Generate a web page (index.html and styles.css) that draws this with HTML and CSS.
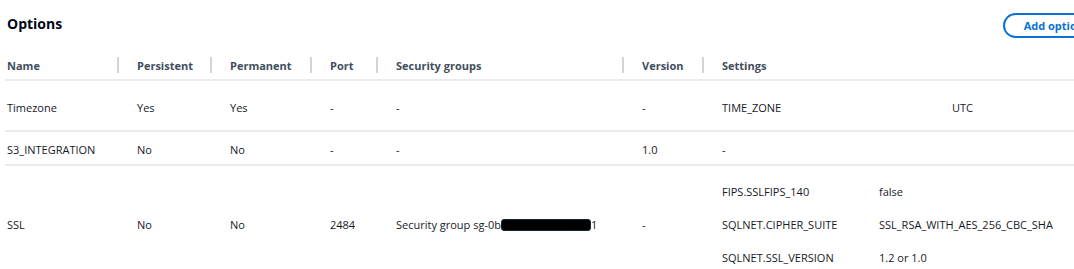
FILE: index.html
```html
<!DOCTYPE html>
<html lang="en">
<head>
    <meta charset="UTF-8">
    <meta name="viewport" content="width=device-width, initial-scale=1.0">
    <title>Options</title>
    <link rel="stylesheet" href="styles.css">
</head>
<body>
    <div class="panel">
        <div class="panel-header">
            <h2>Options</h2>
            <button class="btn-outline">Add option</button>
        </div>

        <table class="options-table">
            <colgroup>
                <col class="col-name">
                <col class="col-persistent">
                <col class="col-permanent">
                <col class="col-port">
                <col class="col-sg">
                <col class="col-version">
                <col class="col-settings">
            </colgroup>
            <thead>
                <tr>
                    <th class="first">Name</th>
                    <th>Persistent</th>
                    <th>Permanent</th>
                    <th>Port</th>
                    <th>Security groups</th>
                    <th>Version</th>
                    <th>Settings</th>
                </tr>
            </thead>
            <tbody>
                <tr class="row-tall">
                    <td class="first">Timezone</td>
                    <td>Yes</td>
                    <td>Yes</td>
                    <td>-</td>
                    <td>-</td>
                    <td>-</td>
                    <td>
                        <div class="settings settings-wide">
                            <span>TIME_ZONE</span><span>UTC</span>
                        </div>
                    </td>
                </tr>
                <tr class="row-short">
                    <td class="first">S3_INTEGRATION</td>
                    <td>No</td>
                    <td>No</td>
                    <td>-</td>
                    <td>-</td>
                    <td>1.0</td>
                    <td>-</td>
                </tr>
                <tr class="row-multi">
                    <td class="first">SSL</td>
                    <td>No</td>
                    <td>No</td>
                    <td>2484</td>
                    <td>Security group sg-0b<span class="redacted"></span>1</td>
                    <td>-</td>
                    <td>
                        <div class="settings">
                            <span>FIPS.SSLFIPS_140</span><span>false</span>
                            <span>SQLNET.CIPHER_SUITE</span><span>SSL_RSA_WITH_AES_256_CBC_SHA</span>
                            <span>SQLNET.SSL_VERSION</span><span>1.2 or 1.0</span>
                        </div>
                    </td>
                </tr>
            </tbody>
        </table>
    </div>
</body>
</html>
```

FILE: styles.css
```css
* {
    margin: 0;
    padding: 0;
    box-sizing: border-box;
}

body {
    font-family: "Open Sans", Arial, sans-serif;
    font-size: 11px;
    color: #16191f;
    background: #fff;
    overflow: hidden;
    width: 1074px;
}

.panel {
    width: 1140px;
    padding-left: 5px;
}

.panel-header {
    display: flex;
    justify-content: space-between;
    align-items: flex-start;
    height: 52px;
    padding-top: 13px;
}

.panel-header h2 {
    font-size: 14px;
    line-height: 20px;
    margin-top: 1px;
    font-weight: 700;
    color: #000716;
    padding-left: 2px;
}

.btn-outline {
    font-family: inherit;
    font-size: 11px;
    font-weight: 700;
    color: #0972d3;
    background: #fff;
    border: 2px solid #0972d3;
    border-radius: 20px;
    height: 25px;
    padding: 0 19px;
    margin-right: 35px;
    white-space: nowrap;
}

/* main table */
.options-table {
    border-collapse: collapse;
    table-layout: fixed;
    width: 1135px;
}

.col-name { width: 112px; }
.col-persistent { width: 93px; }
.col-permanent { width: 100px; }
.col-port { width: 66px; }
.col-sg { width: 246px; }
.col-version { width: 80px; }

.options-table th {
    text-align: left;
    font-weight: 700;
    color: #414d5c;
    height: 28px;
    padding-left: 20px;
    border-bottom: 2px solid #e9ebed;
    position: relative;
}

.options-table th:not(.first)::before {
    content: "";
    position: absolute;
    left: 0;
    top: 5px;
    height: 16px;
    width: 2px;
    background: #d1d5db;
}

.options-table td {
    padding-left: 20px;
    padding-top: 4px;
    vertical-align: middle;
    white-space: nowrap;
}

.options-table .first {
    padding-left: 2px;
}

.options-table tbody tr {
    border-bottom: 2px solid #e9ebed;
}

.options-table tbody tr:last-child {
    border-bottom: none;
}

.row-tall td { height: 51px; }
.row-short td { height: 34px; padding-top: 2px; }
.row-multi td { height: 116px; padding-top: 2px; }

/* nested key/value settings */
.settings {
    display: grid;
    grid-template-columns: 157px auto;
    row-gap: 18px;
}

.settings-wide {
    grid-template-columns: 230px auto;
}

.redacted {
    display: inline-block;
    width: 90px;
    height: 12px;
    background: #000;
    border: 1px solid #0f2a33;
    border-radius: 3px;
    vertical-align: -2px;
}
```
